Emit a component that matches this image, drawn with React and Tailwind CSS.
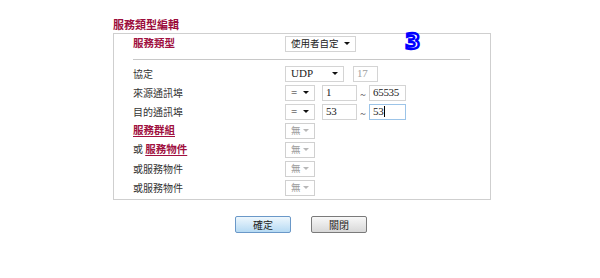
const cjk = { fontFamily: '"Noto Sans CJK TC", "Noto Sans", sans-serif' };
const serif = { fontFamily: '"Liberation Serif", "Noto Sans CJK TC", serif' };

const Arrow = ({ muted }) => (
  <span
    className={
      'ml-auto mr-[5px] shrink-0 w-0 h-0 border-l-[3px] border-r-[3px] border-t-[3px] border-l-transparent border-r-transparent ' +
      (muted ? 'border-t-[#b8b8b8]' : 'border-t-[#111]')
    }
  />
);

const Select = ({ text, w, muted, serifText }) => (
  <div
    className={
      'h-[16px] flex items-center border bg-white pl-[5px] ' +
      (muted ? 'border-[#d0d0d0] text-[#9a9a9a]' : 'border-[#d4d4d4] text-[#222]')
    }
    style={{ width: w, ...(serifText ? serif : cjk) }}
  >
    <span className={serifText ? 'text-[11px] leading-none' : 'text-[9.5px] leading-none'}>{text}</span>
    <Arrow muted={muted} />
  </div>
);

const Input = ({ value, w, focus, muted, caret }) => (
  <div
    className={
      'h-[16px] flex items-center pl-[3px] bg-white border text-[11px] leading-none tracking-[-0.3px] ' +
      (focus ? 'border-[#9cc4e8]' : 'border-[#d4d4d4]') +
      (muted ? ' text-[#a0a0a0]' : ' text-[#222]')
    }
    style={{ width: w, ...serif }}
  >
    {value}
    {caret && <span className="w-px h-[11px] bg-black ml-px" />}
  </div>
);

const Row = ({ label, children }) => (
  <div className="h-[19px] flex items-center">
    <div className="w-[171px] pl-[19px] text-[10px] text-[#333] leading-none">{label}</div>
    <div className="flex items-center">{children}</div>
  </div>
);

const Link = ({ children }) => (
  <span className="font-bold text-[#a0103f] underline underline-offset-2 text-[10.5px]">{children}</span>
);

export default function App() {
  return (
    <div className="w-[600px] h-[278px] bg-white relative" style={cjk}>
      <div className="pl-[113px] pt-[16px]">
        <div className="h-[17px] text-[11px] font-bold text-[#9c0d3c] leading-[17px]">服務類型編輯</div>
        <div className="w-[378px] border border-[#cfcfcf] pt-[1px] pb-[2px]">
          <div className="h-[17px] flex items-center">
            <div className="w-[171px] pl-[19px] text-[10.5px] font-bold text-[#a0103f] leading-none">服務類型</div>
            <Select text="使用者自定" w="71px" />
          </div>
          <div className="mt-[7px] ml-[19px] mr-[20px] h-px bg-[#c8c8c8]" />
          <div className="mt-[4px]">
            <Row label="協定">
              <Select text="UDP" w="59px" serifText />
              <div className="ml-[9px]">
                <Input value="17" w="25px" muted />
              </div>
            </Row>
            <Row label="來源通訊埠">
              <Select text="=" w="30px" serifText />
              <div className="ml-[7px]">
                <Input value="1" w="35px" />
              </div>
              <span className="w-[12px] text-center text-[10px] text-[#333] pt-[4px]" style={serif}>~</span>
              <Input value="65535" w="37px" />
            </Row>
            <Row label="目的通訊埠">
              <Select text="=" w="30px" serifText />
              <div className="ml-[7px]">
                <Input value="53" w="35px" />
              </div>
              <span className="w-[12px] text-center text-[10px] text-[#333] pt-[4px]" style={serif}>~</span>
              <Input value="53" w="37px" focus caret />
            </Row>
            <Row label={<Link>服務群組</Link>}>
              <Select text="無" w="30px" muted />
            </Row>
            <Row label={<span>或 <Link>服務物件</Link></span>}>
              <Select text="無" w="30px" muted />
            </Row>
            <Row label="或服務物件">
              <Select text="無" w="30px" muted />
            </Row>
            <Row label="或服務物件">
              <Select text="無" w="30px" muted />
            </Row>
          </div>
        </div>
        <div className="mt-[16px] pl-[122px] flex gap-[20px]">
          <button className="w-[56px] h-[17px] rounded-[2px] border border-[#6a98c8] bg-gradient-to-b from-[#eef7fd] to-[#b6daf3] text-[10px] text-[#222] leading-none">
            確定
          </button>
          <button className="w-[56px] h-[17px] rounded-[2px] border border-[#7a7a7a] bg-gradient-to-b from-[#f8f8f8] to-[#d8d8d8] text-[10px] text-[#222] leading-none">
            關閉
          </button>
        </div>
      </div>
      <div
        className="absolute left-[405px] top-[31px] text-[22px] font-bold text-white leading-none [-webkit-text-stroke:2.5px_#0000ff]"
        style={{ fontFamily: '"DejaVu Sans", sans-serif' }}
      >
        3
      </div>
    </div>
  );
}
